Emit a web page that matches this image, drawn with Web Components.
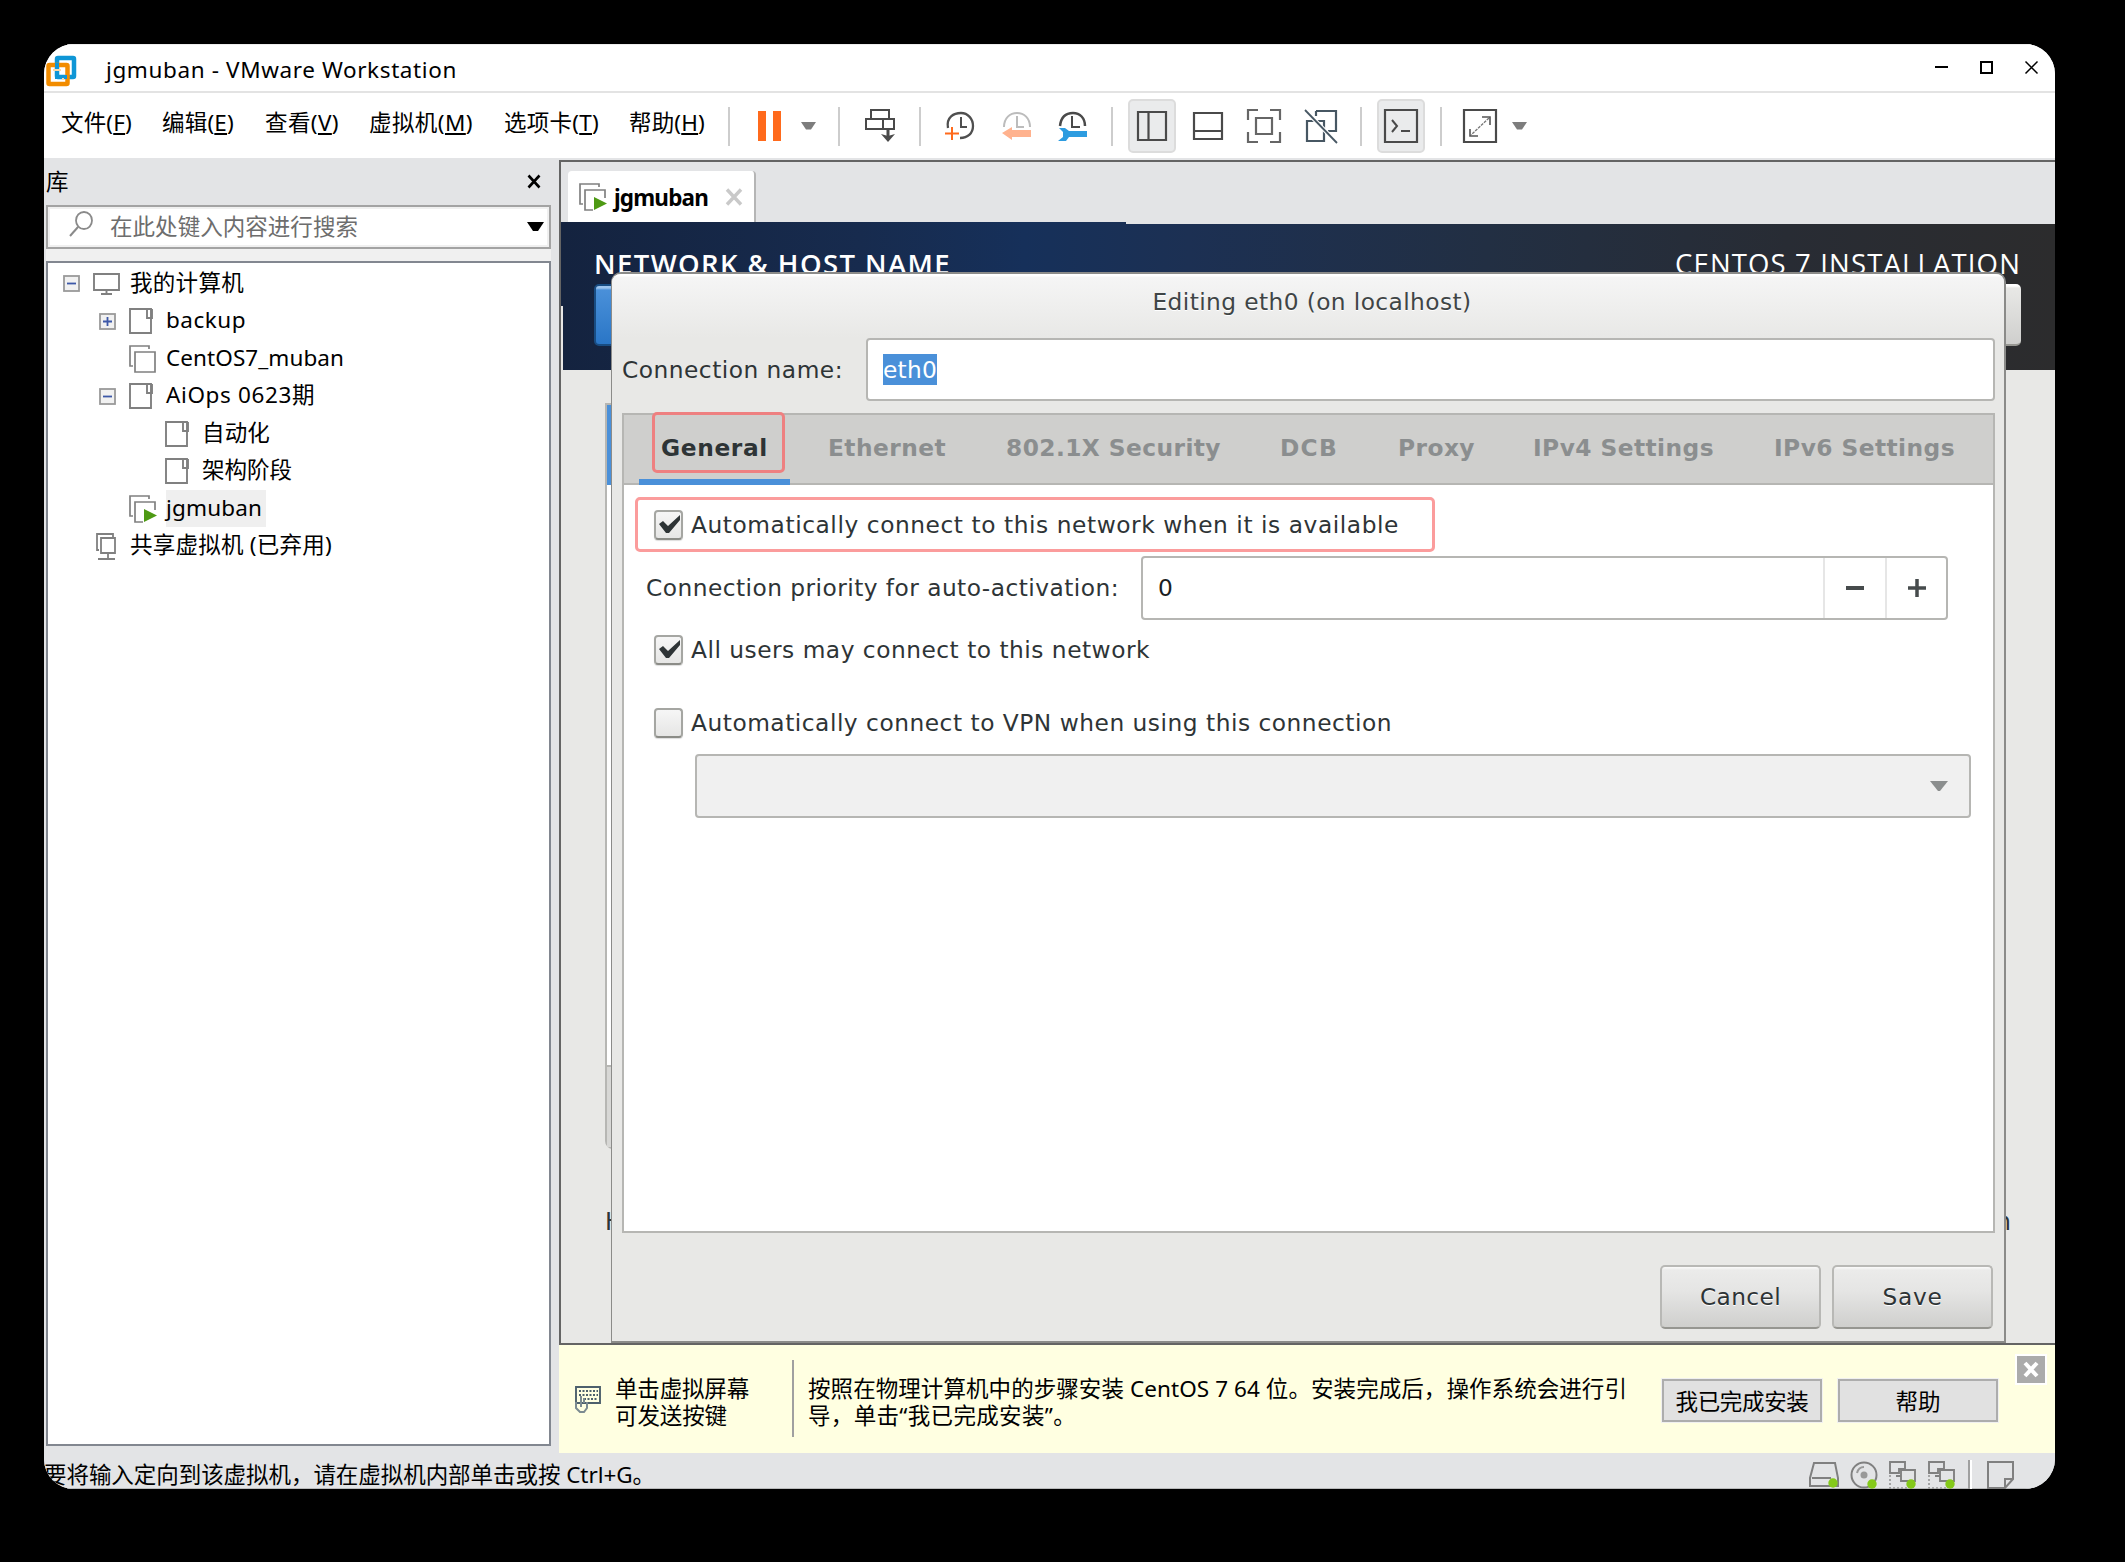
<!DOCTYPE html>
<html lang="zh-CN">
<head>
<meta charset="utf-8">
<title>jgmuban - VMware Workstation</title>
<style>
  body {
    margin: 0;
    height: 1562px;
    overflow: hidden;
    background: #000;
    color: #000;
    font-family: "Noto Sans", "Noto Sans CJK SC", sans-serif;
    font-size: 22.5px;
  }
</style>
</head>
<body>
<vm-window></vm-window>

<script>
const icons = {
  logo: [31, 31, `<rect x="11" y="2" width="17" height="19" rx="1" fill="none" stroke="#0f96d6" stroke-width="4.5"/><rect x="2.5" y="9" width="19" height="19" rx="1" fill="none" stroke="#f28c00" stroke-width="4.5"/><path d="M11 7v14h10" fill="none" stroke="#0f96d6" stroke-width="4"/><path d="M7 14h8M17 22v2" fill="none" stroke="#fbd9a8" stroke-width="2"/>`],
  minimize: [14, 14, `<path d="M0 7h13" stroke="#000" stroke-width="2"/>`],
  maximize: [14, 14, `<rect x="1" y="1" width="11" height="11" fill="none" stroke="#000" stroke-width="2"/>`],
  close: [14, 14, `<path d="M.5 .5l12 12M12.5 .5l-12 12" stroke="#000" stroke-width="1.5"/>`],
  closeBold: [16, 15, `<path d="M2.5 1.5l11 12M13.5 1.5l-11 12" stroke="#000" stroke-width="2.6"/>`],
  tabClose: [18, 18, `<path d="M2 1.5l14 15M16 1.5L2 16.5" stroke="#c9c9c9" stroke-width="3.4"/>`],
  caret: [15, 8, `<path d="M0 0h15l-5 7.5h-5z" fill="#7d7d7d"/>`],
  caretBlack: [17, 10, `<path d="M0 0h17l-6 9h-5z" fill="#000"/>`],
  caretGtk: [18, 10, `<path d="M0 0h18l-8 10h-2z" fill="#8b8e8e"/>`],
  pause: [23, 30, `<path d="M0 0h8v30H0zM15 0h8v30h-8z" fill="#ff6a1c"/>`],
  send: [32, 34, `<path d="M6 10V1h18v9M1 10h28v10H1zM18 10v10" fill="none" stroke="#4a4a4a" stroke-width="2"/><path d="M23 20v8" stroke="#4a4a4a" stroke-width="3"/><path d="M16 25l7 8 7-8-7 2z" fill="#4a4a4a"/>`],
  snapAdd: [30, 30, `<path d="M3 17C1 6 9 2 16 2c7 0 12 6 12 13s-5 12-13 12" fill="none" stroke="#4f4f4f" stroke-width="2.3"/><path d="M16 6v10h6" fill="none" stroke="#4f4f4f" stroke-width="2"/><path d="M7 16v13M0 22.5h14" stroke="#ff6a1c" stroke-width="2"/>`],
  snapBack: [30, 30, `<path d="M2 16C2 7 8 2 15 2s13 5 13 14" fill="none" stroke="#bcbcbc" stroke-width="2"/><path d="M15 5v11h7" fill="none" stroke="#bcbcbc" stroke-width="2"/><path d="M0 22l10-6v3h19v7H10v3z" fill="#ffb28e"/>`],
  snapManage: [32, 30, `<path d="M3 15C4 6 9 2 16 2s12 5 12 13" fill="none" stroke="#4a4a4a" stroke-width="2.5"/><path d="M15 5v11h8" fill="none" stroke="#4a4a4a" stroke-width="2"/><path d="M2 17h6l4 3h18v6H12l-3 4H1l5-4v-5z" fill="#2d9ce0"/>`],
  library: [30, 30, `<path d="M1 1h28v28H1zM11.5 1v28" fill="none" stroke="#4a4a4a" stroke-width="2.2"/>`],
  thumbs: [30, 28, `<path d="M1 1h28v26H1zM1 19h28" fill="none" stroke="#4a4a4a" stroke-width="2.2"/>`],
  fullscreen: [34, 34, `<path d="M1 11V1h10M23 1h10v10M33 23v10H23M11 33H1V23M9 9h16v16H9z" fill="none" stroke="#666" stroke-width="2.2"/>`],
  unity: [34, 34, `<path d="M12 2h20v20h-8M12 2v5M3 12h17v20H3z" fill="none" stroke="#475763" stroke-width="2.2"/><path d="M1 1l32 33" stroke="#fff" stroke-width="4"/><path d="M1 1l32 33" stroke="#475763" stroke-width="1.8"/>`],
  console: [34, 34, `<path d="M1 1h32v32H1z" fill="none" stroke="#4a4a4a" stroke-width="2.2"/><path d="M8 11l5 6-5 6" fill="none" stroke="#4a4a4a" stroke-width="2"/><path d="M17 22h9" stroke="#4a4a4a" stroke-width="2"/>`],
  stretch: [34, 34, `<path d="M1 1h32v32H1z" fill="none" stroke="#4a4a4a" stroke-width="2.2"/><path d="M19 8h8v8M7 20v7h8" fill="none" stroke="#555" stroke-width="1.6"/><path d="M26 9L8 26" stroke="#777" stroke-width="1.3" stroke-dasharray="3 1"/>`],
  search: [26, 27, `<ellipse cx="16" cy="9.5" rx="8" ry="8.5" fill="none" stroke="#8a8a8a" stroke-width="1.8"/><path d="M10 16L2 25" stroke="#8a8a8a" stroke-width="2"/>`],
  minus: [17, 17, `<rect x="1" y="1" width="15" height="15" fill="#f1f1f1" stroke="#9a9a9a" stroke-width="1.8"/><path d="M4 8.5h9" stroke="#3d58a8" stroke-width="1.8"/>`],
  plus: [17, 17, `<rect x="1" y="1" width="15" height="15" fill="#f1f1f1" stroke="#9a9a9a" stroke-width="1.8"/><path d="M4 8.5h9M8.5 4v9" stroke="#3d58a8" stroke-width="1.8"/>`],
  computer: [27, 22, `<path d="M1 1h25v16H1zM13.5 17v3M8 21h11" fill="none" stroke="#808080" stroke-width="1.9"/>`],
  folder: [24, 26, `<path d="M1 1h21v24H1zM18 1v9h5V1" fill="none" stroke="#808080" stroke-width="1.9"/>`],
  vm: [28, 28, `<path d="M4 21H1V1h19v3M6 7h20v20H6z" fill="none" stroke="#808080" stroke-width="1.7"/>`],
  vmOn: [28, 28, `<path d="M4 21H1V1h19v3M14 27H6V7h20v8" fill="none" stroke="#808080" stroke-width="1.7"/><path d="M15 14v13l13-6.5z" fill="#4e9a14"/>`],
  shared: [23, 27, `<path d="M6 17H4V1h16v3M8 5h14v15H8zM15 20v6M5 26h17" fill="none" stroke="#808080" stroke-width="1.8"/>`],
  keyboard: [27, 27, `<path d="M1 1h24v16H1z" fill="none" stroke="#4d606c" stroke-width="1.9"/><path d="M4 5h19M4 9h19M9 13h14" stroke="#4d606c" stroke-width="2" stroke-dasharray="2 1.5"/><path d="M1 16v6l4 4h4l3-4v-6M6 10v11M9 12v5" fill="none" stroke="#7c8b91" stroke-width="2"/>`],
  check: [30, 30, `<path d="M5 14l4-3 5 5 12-11v5L15 23h-3z" fill="#2e3436"/>`],
  boxClose: [28, 27, `<rect width="28" height="27" fill="#ababab"/><path d="M8 7l12 13M20 7L8 20" stroke="#fff" stroke-width="4"/>`],
  drive: [30, 27, `<path d="M5 2h21l3 15v8H1v-8zM3 17h19" fill="none" stroke="#808080" stroke-width="2"/><circle cx="24" cy="22" r="4.7" fill="#84c91a"/>`],
  disc: [28, 28, `<circle cx="14" cy="14" r="12.5" fill="none" stroke="#808080" stroke-width="2"/><circle cx="14" cy="14" r="3.5" fill="#999"/><path d="M7 12c1-4 4-6 7-6" fill="none" stroke="#999" stroke-width="2"/><circle cx="22" cy="23" r="4.7" fill="#84c91a"/>`],
  network: [28, 28, `<path d="M1 1h15v7H10v4H1z" fill="none" stroke="#808080" stroke-width="1.9"/><path d="M12 9h14v11H12zM7 15h5" fill="none" stroke="#808080" stroke-width="1.9"/><path d="M1 14v13h18" fill="none" stroke="#999" stroke-width="1.7" stroke-dasharray="2 2"/><circle cx="22" cy="23" r="4.7" fill="#84c91a"/>`],
  note: [28, 28, `<path d="M1 1h25v17l-8 9H1zM18 27v-9h8" fill="none" stroke="#808080" stroke-width="2"/>`]
};

function define(name, html, setup) {
  const template = document.createElement("template");
  template.innerHTML = html;
  window.customElements.define(name, class extends HTMLElement {
    constructor() {
      super();
      this.attachShadow({ mode: "open" });
      this.shadowRoot.appendChild(template.content.cloneNode(true));
    }
    connectedCallback() {
      if (setup) setup(this, this.shadowRoot);
    }
  });
}

define("vm-icon", `
  <style>
    :host { display: block; flex: none; line-height: 0; }
    svg { display: block; overflow: visible; }
  </style>
  <svg></svg>
`, (host, root) => {
  const [w, h, body] = icons[host.getAttribute("name")];
  const svg = root.querySelector("svg");
  svg.setAttribute("width", w);
  svg.setAttribute("height", h);
  svg.setAttribute("viewBox", `0 0 ${w} ${h}`);
  svg.innerHTML = body;
});

// one line of text, tracked out or in to fill the width in w
define("fit-text", `
  <style>
    :host { display: block; flex: none; line-height: 28px; }
    span { display: block; width: max-content; white-space: nowrap; }
  </style>
  <span><slot></slot></span>
`, (host, root) => {
  const want = Number(host.getAttribute("w"));
  const span = root.querySelector("span");
  const got = span.getBoundingClientRect().width;
  span.style.letterSpacing = (want - got) / host.textContent.length + "px";
  host.style.width = want + "px";
});

define("title-bar", `
  <style>
    :host { display: flex; height: 49px; box-sizing: border-box; border-top: 1px solid #ededed; border-bottom: 2px solid #e3e3e3; background: #fff; }
    .logo { margin: 11px 0 0 2px; }
    .title { margin: 11px auto 0 29px; }
    .min { margin: 15px 31px 0 0; }
    .max { margin: 16px 31px 0 0; }
    .close { margin: 16px 16px 0 0; }
  </style>
  <vm-icon class="logo" name="logo"></vm-icon>
  <fit-text class="title" w="351">jgmuban - VMware Workstation</fit-text>
  <vm-icon class="min" name="minimize"></vm-icon>
  <vm-icon class="max" name="maximize"></vm-icon>
  <vm-icon class="close" name="close"></vm-icon>
`);

define("tool-sep", `
  <style>:host { display: block; flex: none; width: 2px; height: 39px; background: #cdcdcd; margin-top: 2px; }</style>
`);

define("tool-button", `
  <style>
    :host { display: flex; flex: none; align-items: center; justify-content: center; width: 48px; height: 54px; box-sizing: border-box; }
    :host([pressed]) { background: #eaebec; border: 2px solid #dcdcdc; border-radius: 5px; }
  </style>
  <div></div>
`, (host, root) => {
  root.querySelector("div").innerHTML = `<vm-icon name="${host.getAttribute("icon")}"></vm-icon>`;
});

define("menu-bar", `
  <style>
    :host { display: flex; align-items: center; height: 65px; background: #fff; box-sizing: border-box; }
    fit-text { margin: -6px 0 0; }
    fit-text:nth-of-type(1) { margin-left: 17px; }
    .tools { display: grid; align-items: center; flex: none; margin-left: 23px;
      grid-template-columns: 30px 43px 37px 27px 54px 26px 57px 55px 54px 17px 56px 56px 57px 63px 17px 63px 23px 49px 20px; }
    .tools > * { justify-self: start; }
  </style>
  <fit-text w="71">文件(<u>F</u>)</fit-text>
  <fit-text w="72" style="margin-left:30px">编辑(<u>E</u>)</fit-text>
  <fit-text w="74" style="margin-left:31px">查看(<u>V</u>)</fit-text>
  <fit-text w="104" style="margin-left:30px">虚拟机(<u>M</u>)</fit-text>
  <fit-text w="95" style="margin-left:31px">选项卡(<u>T</u>)</fit-text>
  <fit-text w="76" style="margin-left:30px">帮助(<u>H</u>)</fit-text>
  <div class="tools">
    <tool-sep></tool-sep>
    <vm-icon name="pause"></vm-icon>
    <vm-icon name="caret"></vm-icon>
    <tool-sep></tool-sep>
    <vm-icon name="send"></vm-icon>
    <tool-sep></tool-sep>
    <vm-icon name="snapAdd"></vm-icon>
    <vm-icon name="snapBack"></vm-icon>
    <vm-icon name="snapManage"></vm-icon>
    <tool-sep></tool-sep>
    <tool-button icon="library" pressed></tool-button>
    <tool-button icon="thumbs"></tool-button>
    <tool-button icon="fullscreen"></tool-button>
    <tool-button icon="unity"></tool-button>
    <tool-sep></tool-sep>
    <tool-button icon="console" pressed></tool-button>
    <tool-sep></tool-sep>
    <vm-icon name="stretch"></vm-icon>
    <vm-icon name="caret"></vm-icon>
  </div>
`);

define("tree-item", `
  <style>
    :host { display: flex; align-items: center; height: 37.5px; }
    .toggle { width: 17px; flex: none; }
    .icon { width: 37px; flex: none; margin-left: 13px; }
    .label { padding: 4px 0 5px; margin-top: -1px; }
    :host([selected]) .label { background: #efefef; padding-right: 4px; }
  </style>
  <div class="toggle"></div>
  <div class="icon"></div>
  <div class="label"><slot></slot></div>
`, (host, root) => {
  host.style.paddingLeft = 16 + Number(host.getAttribute("level")) * 36 + "px";
  const toggle = host.getAttribute("toggle");
  if (toggle) root.querySelector(".toggle").innerHTML = `<vm-icon name="${toggle}"></vm-icon>`;
  root.querySelector(".icon").innerHTML = `<vm-icon name="${host.getAttribute("icon")}"></vm-icon>`;
});

define("library-panel", `
  <style>
    :host { display: flex; flex-direction: column; flex: none; width: 515px; background: #e3e4e6; box-sizing: border-box; padding: 0 8px 7px 2px; }
    header { display: flex; height: 47px; flex: none; justify-content: space-between; align-items: center; }
    header vm-icon { margin: 0 9px 0 0; }
    .search { display: flex; align-items: center; height: 44px; box-sizing: border-box; border: 2px solid #a3a3a3; box-shadow: inset 0 0 0 2px #f0f0f0; background: #fff; flex: none; }
    .search .glass { margin: -5px 0 0 20px; }
    .search fit-text { margin: 0 auto 0 16px; color: #6d6d6d; }
    .search .down { margin-right: 5px; }
    .gap { height: 12px; flex: none; background: #f0f0f0; }
    .tree { flex: 1; border: 2px solid #828790; background: #fff; padding-top: 2px; }
    tree-item { margin-left: -1px; }
  </style>
  <header>
    <fit-text w="23">库</fit-text>
    <vm-icon name="closeBold"></vm-icon>
  </header>
  <div class="search">
    <vm-icon class="glass" name="search"></vm-icon>
    <fit-text w="248">在此处键入内容进行搜索</fit-text>
    <vm-icon class="down" name="caretBlack"></vm-icon>
  </div>
  <div class="gap"></div>
  <div class="tree">
    <tree-item level="0" toggle="minus" icon="computer"><fit-text w="114">我的计算机</fit-text></tree-item>
    <tree-item level="1" toggle="plus" icon="folder"><fit-text w="80">backup</fit-text></tree-item>
    <tree-item level="1" icon="vm"><fit-text w="178">CentOS7_muban</fit-text></tree-item>
    <tree-item level="1" toggle="minus" icon="folder"><fit-text w="149">AiOps 0623期</fit-text></tree-item>
    <tree-item level="2" icon="folder"><fit-text w="68">自动化</fit-text></tree-item>
    <tree-item level="2" icon="folder"><fit-text w="90">架构阶段</fit-text></tree-item>
    <tree-item level="1" icon="vmOn" selected><fit-text w="96">jgmuban</fit-text></tree-item>
    <tree-item level="0" icon="shared"><fit-text w="202">共享虚拟机 (已弃用)</fit-text></tree-item>
  </div>
`);

define("vm-tabs", `
  <style>
    :host { display: flex; align-items: flex-end; height: 60px; flex: none; background: #e3e4e6; }
    .tab { display: flex; align-items: center; height: 51px; width: 188px; box-sizing: border-box; margin-left: 7px;
           background: #fff; border-right: 2px solid #b5b5b5; border-radius: 4px 4px 0 0; font-weight: 700; }
    .tab vm-icon { margin-left: 11px; }
    fit-text { margin-left: 7px; margin-top: 2px; }
  </style>
  <div class="tab">
    <vm-icon name="vmOn"></vm-icon>
    <fit-text w="94">jgmuban</fit-text>
    <vm-icon name="tabClose" style="margin-left:17px"></vm-icon>
  </div>
`);

define("gtk-check", `
  <style>
    :host { display: flex; align-items: center; height: 30px; }
    .box { width: 29px; height: 30px; flex: none; box-sizing: border-box; border: 2px solid #a5a6a2; border-bottom-color: #8b8c87;
           border-radius: 4px; background: linear-gradient(#f6f6f6, #e6e6e5); box-shadow: 0 1px 1px #ddd; }
    .box vm-icon { margin: -2px; display: none; }
    :host([checked]) .box vm-icon { display: block; }
    .text { margin-left: 8px; }
  </style>
  <div class="box"><vm-icon name="check"></vm-icon></div>
  <div class="text"><slot></slot></div>
`);

define("gtk-button", `
  <style>
    :host { display: flex; align-items: center; justify-content: center; width: 161px; height: 64px; box-sizing: border-box;
            border: 2px solid #b8b8b5; border-bottom-color: #969691; border-radius: 5px;
            background: linear-gradient(#fbfbfb 0, #ebebea 3px, #e5e5e4 40%, #cfcfcd); text-shadow: 0 1px #fff; }
  </style>
  <slot></slot>
`);

define("gtk-tab", `
  <style>
    :host { display: flex; align-items: center; height: 100%; box-sizing: border-box; padding: 0 22px 2px; position: relative; color: #8b8e8f; font-weight: 700; }
    :host([active]) { color: #2e3436; border-bottom: 6px solid #4a90d9; padding-top: 6px; }
    .mark { display: none; }
    :host([active]) .mark { display: block; position: absolute; left: 13px; top: -1px; width: 133px; height: 61px; box-sizing: border-box;
            border: 3px solid #ee8080; border-radius: 5px; }
  </style>
  <slot></slot>
  <div class="mark"></div>
`);

define("spin-box", `
  <style>
    :host { display: flex; align-items: stretch; width: 807px; height: 64px; box-sizing: border-box; border: 2px solid #b6b6b3; border-radius: 4px; background: #fff; color: #1b1e1f; }
    .value { flex: 1; padding-left: 15px; line-height: 60px; }
    .step { width: 60px; border-left: 2px solid #e6e6e6; display: flex; align-items: center; justify-content: center; }
    .step + .step { width: 59px; }
  </style>
  <div class="value"><slot></slot></div>
  <div class="step"><svg width="20" height="20"><path d="M1 10h18" stroke="#464b4c" stroke-width="4"/></svg></div>
  <div class="step"><svg width="20" height="20"><path d="M1 10h18M10 1v18" stroke="#464b4c" stroke-width="3.5"/></svg></div>
`);

define("connection-dialog", `
  <style>
    :host { display: flex; flex-direction: column; box-sizing: border-box; width: 1395px; height: 1071px;
            border: 2px solid #8b8b89; border-left-width: 1px; border-radius: 10px 10px 0 0; background: #e8e8e6; color: #2e3436;
            font-family: "DejaVu Sans", sans-serif; font-size: 23.3px; overflow: hidden; }
    .title { display: flex; justify-content: center; padding: 14px 0 0 8px; height: 64px; box-sizing: border-box; flex: none;
             background: linear-gradient(#fff 0 2px, #f5f5f5 3px, #e8e8e6); text-shadow: 0 1px #fff; color: #3f4546; }
    .name { display: flex; align-items: center; height: 63px; flex: none; padding: 0 9px 0 10px; }
    .entry { flex: 1; display: flex; align-items: center; height: 63px; box-sizing: border-box; margin-left: 23px; padding-left: 15px;
             border: 2px solid #b6b6b3; border-radius: 4px; background: #fff; }
    .entry fit-text { background: #4a90d9; color: #fff; line-height: 31px; }
    .tabs { display: flex; height: 72px; box-sizing: border-box; flex: none; margin: 12px 9px 0 10px; padding-left: 15px;
            background: #cfcfcd; border: 2px solid #b6b6b3; }
    .tabs gtk-tab[active] { height: 72px; margin-top: -2px; }
    .page { height: 748px; box-sizing: border-box; flex: none; margin: 0 9px 0 10px; padding-top: 12px;
            border: 2px solid #b6b6b3; border-top: 0; background: #fff; }
    .ring { box-sizing: border-box; width: 800px; height: 55px; margin-left: 11px; padding: 10px 0 0 16px; border: 3px solid #fb9c9c; border-radius: 5px; }
    .row { display: flex; align-items: center; margin: 4px 0 0 22px; }
    .row spin-box { margin-left: 22px; }
    .page > gtk-check { margin: 15px 0 0 30px; }
    .combo { display: flex; align-items: center; justify-content: flex-end; box-sizing: border-box; width: 1276px; height: 64px; margin: 16px 0 0 71px; padding-right: 21px;
             border: 2px solid #b6b6b3; border-radius: 4px; background: #f0f0f0; }
    .actions { display: flex; justify-content: flex-end; gap: 11px; margin: 32px 11px 0; }
  </style>
  <div class="title"><fit-text w="319">Editing eth0 (on localhost)</fit-text></div>
  <div class="name"><fit-text w="221">Connection name:</fit-text><div class="entry"><fit-text w="54">eth0</fit-text></div></div>
  <div class="tabs">
    <gtk-tab active><fit-text w="107">General</fit-text></gtk-tab>
    <gtk-tab style="padding-left:38px"><fit-text w="118">Ethernet</fit-text></gtk-tab>
    <gtk-tab style="padding-left:38px"><fit-text w="215">802.1X Security</fit-text></gtk-tab>
    <gtk-tab style="padding-left:37px"><fit-text w="58">DCB</fit-text></gtk-tab>
    <gtk-tab style="padding-left:38px"><fit-text w="77">Proxy</fit-text></gtk-tab>
    <gtk-tab style="padding-left:36px"><fit-text w="181">IPv4 Settings</fit-text></gtk-tab>
    <gtk-tab style="padding-left:38px"><fit-text w="181">IPv6 Settings</fit-text></gtk-tab>
  </div>
  <div class="page">
    <div class="ring"><gtk-check checked><fit-text w="708">Automatically connect to this network when it is available</fit-text></gtk-check></div>
    <div class="row"><fit-text w="473">Connection priority for auto-activation:</fit-text><spin-box>0</spin-box></div>
    <gtk-check checked><fit-text w="459">All users may connect to this network</fit-text></gtk-check>
    <gtk-check style="margin-top:43px"><fit-text w="701">Automatically connect to VPN when using this connection</fit-text></gtk-check>
    <div class="combo"><vm-icon name="caretGtk"></vm-icon></div>
  </div>
  <div class="actions">
    <gtk-button><fit-text w="81">Cancel</fit-text></gtk-button>
    <gtk-button><fit-text w="60">Save</fit-text></gtk-button>
  </div>
`);

define("guest-screen", `
  <style>
    :host { display: block; position: relative; flex: none; height: 1121px; overflow: hidden; background: #e8e8e6;
            font-family: "Open Sans", sans-serif; font-size: 27.5px; color: #fff; }
    .banner { display: flex; flex-direction: column; box-sizing: border-box; height: 148px;
              background: linear-gradient(90deg, #14233f, #172b4e 20%, #16305a 31%, #1c3053 42%, #222f43 62%, #282c34 82%, #2c2c2d); }
    .edge { height: 2px; margin-left: 565px; background: #e3e4e6; flex: none; }
    .heads { display: flex; justify-content: space-between; margin: 20px 34px 0 33px; }
    .heads fit-text { line-height: 40px; }
    .buttons { display: flex; justify-content: space-between; padding: 0 34px 0 33px; }
    .buttons div { width: 120px; height: 62px; box-sizing: border-box; border-radius: 5px; }
    .done { background: linear-gradient(#9cc4ee 0 2px, #4a90d9 4px, #2a76c6); border: 2px solid #184c82; }
    .help { background: linear-gradient(#fff 0 2px, #e8e8e6 4px, #cfcfcd); border-bottom: 2px solid #969691; }
    .list { display: flex; flex-direction: column; width: 400px; height: 746px; margin: 33px 0 0 44px; box-sizing: border-box; border: 2px solid #b6b6b3; border-radius: 0 0 0 8px; background: #fff; }
    .picked { height: 80px; background: #4a90d9; }
    .listbar { height: 80px; margin-top: auto; background: #d7d7d5; border-top: 2px solid #b6b6b3; }
    .host { display: flex; justify-content: space-between; margin: 58px 44px 0 44px; color: #2e3436; font: 24px/30px "DejaVu Sans", sans-serif; }
    .side { position: absolute; left: 0; top: 84px; width: 2px; height: 1037px; background: #e8e8e6; }
    connection-dialog { position: absolute; left: 50px; top: 50px; }
  </style>
  <div class="banner">
    <div class="edge"></div>
    <div class="heads"><fit-text w="357" style="font-weight:600">NETWORK &amp; HOST NAME</fit-text><fit-text w="346">CENTOS 7 INSTALLATION</fit-text></div>
    <div class="buttons"><div class="done"></div><div class="help"></div></div>
  </div>
  <div class="list"><div class="picked"></div><div class="listbar"></div></div>
  <div class="host"><span>H</span><span>n</span></div>
  <div class="side"></div>
  <connection-dialog></connection-dialog>
`);

define("hint-bar", `
  <style>
    :host { display: flex; height: 108px; flex: none; background: #ffffe1; margin-left: -2px; }
    fit-text { line-height: 26.5px; }
    .keys { margin: 41px 0 0 16px; }
    .send { margin: 31px 0 0 13px; width: 177px; }
    .rule { width: 2px; height: 77px; margin-top: 15px; background: #a0a0a0; flex: none; }
    .steps { margin: 31px 0 0 14px; width: 854px; }
    .btn { display: flex; align-items: center; justify-content: center; width: 160px; height: 43px; box-sizing: border-box; margin: 34px 16px 0 0;
           border: 2px solid #adadad; background: #e1e1e1; outline: 1px solid #f0f0f0; flex: none; }
    .btn fit-text { margin-top: 3px; }
    .x { margin: 11px 0 0 3px; outline: 2px solid #fff; height: 27px; }
  </style>
  <vm-icon class="keys" name="keyboard"></vm-icon>
  <div class="send"><fit-text w="134">单击虚拟屏幕</fit-text><fit-text w="112">可发送按键</fit-text></div>
  <div class="rule"></div>
  <div class="steps"><fit-text w="819">按照在物理计算机中的步骤安装 CentOS 7 64 位。安装完成后，操作系统会进行引</fit-text><fit-text w="268">导，单击“我已完成安装”。</fit-text></div>
  <div class="btn"><fit-text w="133">我已完成安装</fit-text></div>
  <div class="btn"><fit-text w="45">帮助</fit-text></div>
  <vm-icon class="x" name="boxClose"></vm-icon>
`);

define("status-bar", `
  <style>
    :host { display: flex; height: 36px; background: #e3e4e6; box-sizing: border-box; border-bottom: 1px solid #b9babb; }
    .msg { margin: 8px auto 0 0; }
    vm-icon { margin: 8px 11px 0 0; }
    .rule { width: 2px; height: 33px; margin: 7px 15px 0 4px; background: #a0a0a0; border-right: 2px solid #fff; }
  </style>
  <fit-text class="msg" w="611">要将输入定向到该虚拟机，请在虚拟机内部单击或按 Ctrl+G。</fit-text>
  <vm-icon name="drive"></vm-icon>
  <vm-icon name="disc"></vm-icon>
  <vm-icon name="network"></vm-icon>
  <vm-icon name="network" style="margin-right:8px"></vm-icon>
  <div class="rule"></div>
  <vm-icon name="note" style="margin-right:40px"></vm-icon>
`);

define("vm-window", `
  <style>
    :host { display: flex; flex-direction: column; width: 2011px; height: 1445px; margin: 44px 0 0 44px; border-radius: 30px; overflow: hidden; background: #e3e4e6; }
    .body { display: flex; height: 1295px; }
    .console { display: flex; flex-direction: column; flex: 1; min-width: 0; margin-top: 2px; border-top: 2px solid #646464; border-left: 2px solid #646464; }
    .line { height: 2px; background: #646464; flex: none; }
  </style>
  <title-bar></title-bar>
  <menu-bar></menu-bar>
  <div class="body">
    <library-panel></library-panel>
    <div class="console">
      <vm-tabs></vm-tabs>
      <guest-screen></guest-screen>
      <div class="line"></div>
      <hint-bar></hint-bar>
    </div>
  </div>
  <status-bar></status-bar>
`);
</script>
</body>
</html>
